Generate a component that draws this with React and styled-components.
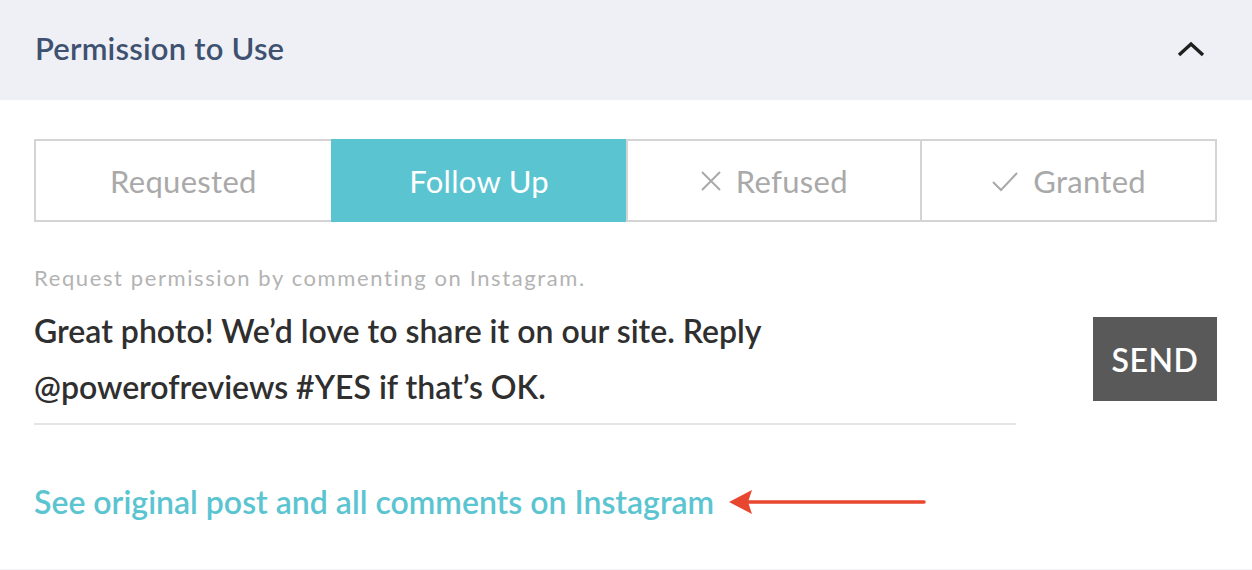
import React from 'react';
import styled, { createGlobalStyle } from 'styled-components';

const Global = createGlobalStyle`
  body {
    margin: 0;
    background: #ffffff;
    font-family: "Lato", "Noto Sans", sans-serif;
  }
`;

const Panel = styled.div`
  width: 1252px;
  height: 570px;
  overflow: hidden;
  background: #fff;
  border-bottom: 1px solid #f2f2f4;
  box-sizing: border-box;
`;

const Header = styled.div`
  height: 100px;
  background: #eff0f5;
  display: flex;
  align-items: center;
  justify-content: space-between;
  padding: 0 46px 0 35px;
  box-sizing: border-box;
`;

const Title = styled.h2`
  margin: 0;
  margin-top: -5px;
  font-size: 31px;
  font-weight: 600;
  color: #3e5170;
  letter-spacing: 0.2px;
`;

const Body = styled.div`
  padding: 39px 35px 0 34px;
`;

const Tabs = styled.div`
  display: grid;
  grid-template-columns: repeat(4, 1fr);
  height: 83px;
  border: 2px solid #d4d4d4;
  box-sizing: border-box;
  width: 1183px;
`;

const Tab = styled.div`
  display: flex;
  align-items: center;
  justify-content: center;
  gap: 14px;
  font-size: 31px;
  letter-spacing: 0.3px;
  color: ${p => (p.active ? '#ffffff' : '#a9a9a9')};
  background: ${p => (p.active ? '#5bc4d1' : '#ffffff')};
  border-left: ${p => (p.first ? 'none' : '2px solid #d4d4d4')};
  border-left-color: ${p => (p.active ? '#5bc4d1' : '#d4d4d4')};
  margin-top: ${p => (p.active ? '-2px' : '0')};
  margin-bottom: ${p => (p.active ? '-2px' : '0')};
`;

const Hint = styled.div`
  margin-top: 42px;
  font-size: 22px;
  letter-spacing: 1.6px;
  color: #b3b3b3;
`;

const Compose = styled.div`
  display: flex;
  align-items: flex-start;
  justify-content: space-between;
`;

const Message = styled.div`
  width: 982px;
  font-size: 32px;
  font-weight: 600;
  color: #2f2f2f;
  line-height: 56px;
  padding-top: 12px;
  padding-bottom: 8px;
  border-bottom: 2px solid #e4e4e4;
`;

const SendButton = styled.button`
  margin-top: 26px;
  width: 124px;
  height: 84px;
  border: none;
  background: #595959;
  color: #fff;
  font-family: "Lato", sans-serif;
  font-size: 32px;
  font-weight: 600;
  letter-spacing: 0.5px;
`;

const LinkRow = styled.div`
  display: flex;
  align-items: center;
  gap: 14px;
  margin-top: 57px;
`;

const OriginalLink = styled.a`
  font-size: 32px;
  font-weight: 600;
  color: #5bc4d1;
  text-decoration: none;
`;

const Chevron = () => (
  <svg width="30" height="20" viewBox="0 0 30 20">
    <path d="M3 15 L15 4 L27 15" fill="none" stroke="#1f1f1f" strokeWidth="3.4" />
  </svg>
);

const Cross = () => (
  <svg width="22" height="22" viewBox="0 0 22 22">
    <path d="M2 2 L20 20 M20 2 L2 20" stroke="#a9a9a9" strokeWidth="2" />
  </svg>
);

const Check = () => (
  <svg width="28" height="22" viewBox="0 0 28 22">
    <path d="M2 12 L10 20 L26 3" fill="none" stroke="#a9a9a9" strokeWidth="2" />
  </svg>
);

const Arrow = () => (
  <svg width="200" height="26" viewBox="0 0 200 26">
    <path d="M1 13 L24 1 L20 13 L24 25 Z" fill="#e8462f" />
    <path d="M20 13 L196 13" stroke="#e8462f" strokeWidth="3.5" strokeLinecap="round" />
  </svg>
);

export default function App() {
  return (
    <Panel>
      <Global />
      <Header>
        <Title>Permission to Use</Title>
        <Chevron />
      </Header>
      <Body>
        <Tabs>
          <Tab first>Requested</Tab>
          <Tab active>Follow Up</Tab>
          <Tab><Cross />Refused</Tab>
          <Tab><Check />Granted</Tab>
        </Tabs>
        <Hint>Request permission by commenting on Instagram.</Hint>
        <Compose>
          <Message>
            Great photo! We’d love to share it on our site. Reply
            <br />
            @powerofreviews #YES if that’s OK.
          </Message>
          <SendButton>SEND</SendButton>
        </Compose>
        <LinkRow>
          <OriginalLink href="#">See original post and all comments on Instagram</OriginalLink>
          <Arrow />
        </LinkRow>
      </Body>
    </Panel>
  );
}
